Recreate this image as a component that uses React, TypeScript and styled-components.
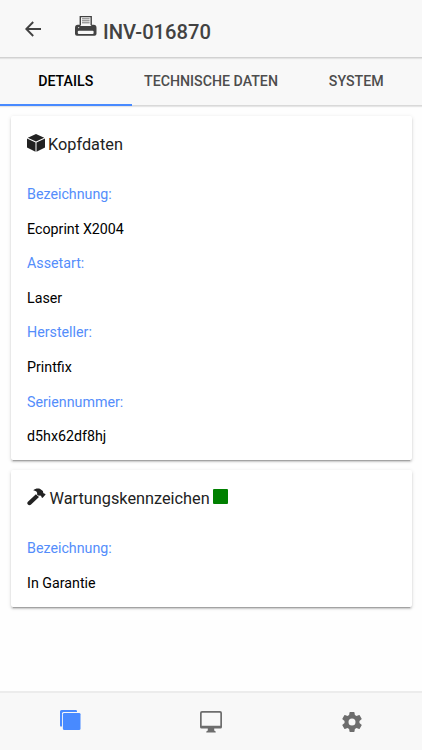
import React from "react";
import styled, { createGlobalStyle } from "styled-components";

const GlobalStyle = createGlobalStyle`
  * { box-sizing: border-box; }
  body { margin: 0; background: #fefefe; font-family: Roboto, sans-serif; }
`;

const Screen = styled.div`
  display: flex;
  flex-direction: column;
  height: 750px;
  width: 100%;
  overflow: hidden;
  background: #fefefe;
`;

const Header = styled.header`
  display: flex;
  flex: none;
  height: 58px;
  padding-left: 25px;
  background: #f8f8f8;
  border-bottom: 1px solid #d2d2d2;
  box-shadow: 0 1px 1px #e4e4e4;
  position: relative;
  color: #424242;
`;

const BackButton = styled.button`
  display: flex;
  width: 50px;
  padding: 21px 0 0;
  border: 0;
  background: none;
  color: inherit;
`;

const Title = styled.h1`
  display: flex;
  margin: 0;
  font-size: 20.2px;
  font-weight: 500;
  line-height: 24px;
  gap: 6px;
  padding-top: 15px;
  span { padding-top: 5px; }
`;

const Tabs = styled.nav`
  display: flex;
  flex: none;
  height: 48px;
  background: #f8f8f8;
  border-bottom: 1px solid #d9d9d9;
  box-shadow: 0 1px 1px #e6e6e6;
`;

const Tab = styled.button<{ $width: number; $active?: boolean }>`
  flex: 0 0 ${(p) => p.$width}px;
  height: 48px;
  padding: 0 0 1px;
  border: 0;
  border-bottom: 2px solid ${(p) => (p.$active ? "#488aff" : "transparent")};
  background: none;
  color: ${(p) => (p.$active ? "#000" : "#4d4d4d")};
  font: 500 14.2px Roboto, sans-serif;
  white-space: nowrap;
`;

const Content = styled.main`
  display: flex;
  flex: 1;
  flex-direction: column;
  gap: 10px;
  padding: 10px 10.5px;
`;

const Card = styled.section`
  padding: 0 16.5px 6.5px;
  background: #fff;
  border-radius: 2px;
  box-shadow: 0 2px 2px rgba(0, 0, 0, 0.14), 0 3px 1px -2px rgba(0, 0, 0, 0.2),
    0 1px 4px rgba(0, 0, 0, 0.12);
`;

const CardTitle = styled.h2<{ $gap: number }>`
  display: flex;
  gap: ${(p) => p.$gap}px;
  height: 61.1px;
  margin: 0;
  padding-top: 18px;
  color: #222;
  font-size: 16.3px;
  font-weight: 400;
  line-height: 21px;
`;

const Swatch = styled.i`
  width: 15px;
  height: 15px;
  margin-top: 1px;
  border-radius: 1px;
  background: #008000;
`;

const Fields = styled.dl`
  margin: 0;
  font-size: 14.25px;
  line-height: 34.6px;
`;

const Label = styled.dt`
  color: #548dfb;
`;

const Value = styled.dd`
  margin: 0;
  color: #000;
`;

const Footer = styled.footer`
  display: grid;
  flex: none;
  grid-template-columns: repeat(3, 1fr);
  height: 59px;
  background: #f8f8f8;
  border-top: 2px solid #ececec;
`;

const FooterButton = styled.button<{ $active?: boolean }>`
  display: flex;
  align-items: center;
  justify-content: center;
  padding: ${(p) => (p.$active ? 0 : 1)}px 0 ${(p) => (p.$active ? 2 : 0)}px;
  border: 0;
  background: none;
  color: ${(p) => (p.$active ? "#488aff" : "#6d6d6d")};
`;

const ArrowIcon = () => (
  <svg width="16" height="16" viewBox="0 0 16 16" fill="none" stroke="currentColor" strokeWidth="1.9">
    <path d="M16 8H1.5M8.2 1 1.3 8l6.9 7" />
  </svg>
);

const PrinterIcon = () => (
  <svg width="22" height="22" viewBox="0 0 22 22">
    <path d="M5.3 10V1.6h10.9V10" fill="#f8f8f8" stroke="currentColor" strokeWidth="1.4" />
    <path d="M7 3.8h7.6M7 5.8h7.6M7 7.8h7.6" stroke="#777" strokeWidth="1" />
    <path d="M3.2 9.8h1.6l1.3 1.2h9.4l1.3-1.2h1.6a3 3 0 0 1 3.1 3v5.9a2 2 0 0 1-2 2H2a2 2 0 0 1-2-2v-5.9a3 3 0 0 1 3.2-3Z" fill="currentColor" />
    <rect x="2.8" y="15.8" width="15.8" height="3.2" rx="1" fill="#f8f8f8" />
    <circle cx="3.7" cy="12.6" r=".6" fill="#f8f8f8" />
  </svg>
);

const CubeIcon = () => (
  <svg width="18" height="19" viewBox="0 0 18 19" fill="currentColor">
    <path d="M9 .1 17.2 3.7 9 7.6 .8 3.7ZM0 4.6l8.5 4v9.2L0 13.6ZM18 4.6l-8.5 4v9.2l8.5-4.2Z" />
  </svg>
);

const HammerIcon = () => (
  <svg width="19" height="18" viewBox="0 0 19 18" fill="currentColor">
    <path d="M6.2 2.3C8.2.4 11 .1 13.2.9l2.7 2.2.4 2 1 .7.5-.4.8 1.1-3.1 3.4-1.2-.9v-.9l-1.3-.7-1.2.4-1.8-1.4.2-1.3-.8-1.6C8.5 2.8 7.4 2.5 6.2 2.3ZM8.9 6.3l3.1 2.8-8.2 7.7c-1 .8-2.2.5-2.9-.2-.9-.9-.8-2 0-2.8Z" />
  </svg>
);

const CopiesIcon = () => (
  <svg width="21" height="21" viewBox="0 0 21 21" fill="currentColor">
    <path d="M1.6 0h14.2a1.2 1.2 0 0 1 1.2 1.2V2H3.6A1.6 1.6 0 0 0 2 3.6v13h-.8A1.2 1.2 0 0 1 0 15.400V1.6A1.6 1.6 0 0 1 1.600 0Z" />
    <rect x="2.9" y="2.9" width="17.6" height="17.2" rx="1.4" />
  </svg>
);

const MonitorIcon = () => (
  <svg width="22" height="22" viewBox="0 0 22 22" fill="currentColor">
    <path fillRule="evenodd" d="M2 0h18a2 2 0 0 1 2 2v14a1.6 1.6 0 0 1-1.6 1.6h-6.2v1.8l1.5 1v1.2H6.3v-1.2l1.5-1v-1.8H1.6A1.6 1.6 0 0 1 0 16V2a2 2 0 0 1 2-2Zm.4 1.7a.7.7 0 0 0-.7.7v12.3h18.6V2.4a.7.7 0 0 0-.7-.7Z" />
  </svg>
);

const GearIcon = () => (
  <svg width="24" height="24" viewBox="0 0 24 24" fill="currentColor">
    <path d="M19.43 12.98a7.8 7.8 0 0 0 0-1.96l2.11-1.65a.5.5 0 0 0 .12-.64l-2-3.46a.5.5 0 0 0-.61-.22l-2.49 1a7.3 7.3 0 0 0-1.69-.98l-.38-2.65A.5.5 0 0 0 14 2h-4a.5.5 0 0 0-.49.42l-.38 2.65c-.61.25-1.17.58-1.69.98l-2.49-1a.5.5 0 0 0-.61.22l-2 3.46a.5.5 0 0 0 .12.64l2.11 1.65a8 8 0 0 0 0 1.96l-2.11 1.65a.5.5 0 0 0-.12.64l2 3.46c.12.22.37.31.61.22l2.49-1c.52.4 1.08.73 1.69.98l.38 2.65c.04.24.24.42.49.42h4c.25 0 .45-.18.49-.42l.38-2.65a7.3 7.3 0 0 0 1.69-.98l2.49 1c.24.09.49 0 .61-.22l2-3.46a.5.5 0 0 0-.12-.64ZM12 15.5a3.5 3.5 0 1 1 0-7 3.5 3.5 0 0 1 0 7Z" />
  </svg>
);

const headerFields = [
  ["Bezeichnung:", "Ecoprint X2004"],
  ["Assetart:", "Laser"],
  ["Hersteller:", "Printfix"],
  ["Seriennummer:", "d5hx62df8hj"],
];

const FieldList = ({ items }: { items: string[][] }) => (
  <Fields>
    {items.map(([label, value]) => (
      <React.Fragment key={label}>
        <Label>{label}</Label>
        <Value>{value}</Value>
      </React.Fragment>
    ))}
  </Fields>
);

export default function App() {
  return (
    <Screen>
      <GlobalStyle />
      <Header>
        <BackButton><ArrowIcon /></BackButton>
        <Title><PrinterIcon /><span>INV-016870</span></Title>
      </Header>
      <Tabs>
        <Tab $width={131.5} $active>DETAILS</Tab>
        <Tab $width={159}>TECHNISCHE DATEN</Tab>
        <Tab $width={131.5}>SYSTEM</Tab>
      </Tabs>
      <Content>
        <Card>
          <CardTitle $gap={3}><CubeIcon /><span>Kopfdaten</span></CardTitle>
          <FieldList items={headerFields} />
        </Card>
        <Card>
          <CardTitle $gap={3.5}><HammerIcon /><span>Wartungskennzeichen</span><Swatch /></CardTitle>
          <FieldList items={[["Bezeichnung:", "In Garantie"]]} />
        </Card>
      </Content>
      <Footer>
        <FooterButton $active><CopiesIcon /></FooterButton>
        <FooterButton><MonitorIcon /></FooterButton>
        <FooterButton><GearIcon /></FooterButton>
      </Footer>
    </Screen>
  );
}
